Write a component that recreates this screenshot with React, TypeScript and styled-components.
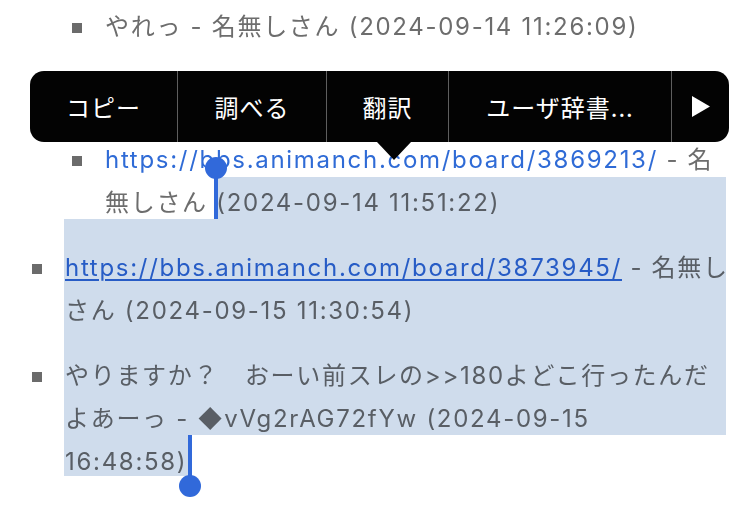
import styled, { createGlobalStyle } from "styled-components";

const GlobalStyle = createGlobalStyle`
  html, body {
    margin: 0;
    padding: 0;
    background: #fff;
  }
  body {
    font-family: "Inter", "Noto Sans CJK JP", sans-serif;
    -webkit-font-smoothing: antialiased;
  }
`;

const menuItems = [
    { label: "コピー", width: 147 },
    { label: "調べる", width: 149 },
    { label: "翻訳", width: 122 },
    { label: "ユーザ辞書...", width: 223 },
];

export default function App() {
    return (
        <>
            <GlobalStyle />
            <Page>
                <Thread>
                    <List $indent={72}>
                        <Item $after={68}>
                            <Bullet />
                            <Text>やれっ - 名無しさん (2024-09-14 11:26:09)</Text>
                        </Item>
                        <Item>
                            <Bullet />
                            <Text>
                                <Link href="#">https://bbs.animanch.com/board/3869213/</Link> - 名無しさん (2024-09-14 11:51:22)
                            </Text>
                        </Item>
                    </List>
                    <List $indent={32}>
                        <Item>
                            <Bullet />
                            <Text>
                                <Link href="#" $underline>https://bbs.animanch.com/board/3873945/</Link> - 名無しさん (2024-09-15 11:30:54)
                            </Text>
                        </Item>
                        <Item>
                            <Bullet />
                            <Text>
                                やりますか？　おーい前スレの&gt;&gt;180よどこ行ったんだよあーっ - ◆vVg2rAG72fYw (2024-09-15
                                <br />
                                16:48:58)
                            </Text>
                        </Item>
                    </List>
                </Thread>

                {/* selection highlight */}
                <Selection>
                    <SelRect $x={218} $y={177} $w={508} $h={42} />
                    <SelRect $x={64} $y={219} $w={662} $h={216} />
                    <SelRect $x={64} $y={435} $w={125} $h={41} />
                </Selection>
                <Handle $x={216} $y={168} $h={51} $knob="top" />
                <Handle $x={190} $y={435} $h={51} $knob="bottom" />

                <Callout>
                    {menuItems.map((m) => (
                        <MenuItem key={m.label} $w={m.width}>{m.label}</MenuItem>
                    ))}
                    <MenuItem $w={58}>
                        <svg width="18" height="21" viewBox="0 0 18 21">
                            <path d="M0 0 L18 10.5 L0 21 Z" fill="#fff" />
                        </svg>
                    </MenuItem>
                </Callout>
            </Page>
        </>
    );
}

const Page = styled.div`
    position: relative;
    width: 750px;
    height: 513px;
    overflow: hidden;
    box-sizing: border-box;
    padding: 5px 17px 0 0;
    color: #6d6d6d;
    font-size: 24px;
    line-height: 43px;
    letter-spacing: 1.7px;
`;

const Thread = styled.div`
    display: flex;
    flex-direction: column;
    gap: 22px;
`;

const List = styled.ul<{ $indent: number }>`
    list-style: none;
    margin: 0;
    padding: 0 0 0 ${({ $indent }) => $indent}px;
    display: flex;
    flex-direction: column;
    gap: 22px;
`;

const Item = styled.li<{ $after?: number }>`
    display: grid;
    grid-template-columns: 10px 1fr;
    column-gap: 23px;
    margin-bottom: ${({ $after }) => $after ?? 0}px;
`;

const Bullet = styled.span`
    height: 43px;
    display: flex;
    align-items: center;

    &::before {
        content: "";
        width: 10px;
        height: 10px;
        margin-top: 2px;
        background: #6b6b6b;
    }
`;

const Text = styled.span`
    display: block;
`;

const Link = styled.a<{ $underline?: boolean }>`
    color: #2f6bd6;
    text-decoration: ${({ $underline }) => ($underline ? "underline" : "none")};
    text-decoration-thickness: 2px;
    text-underline-offset: 3px;
`;

const Selection = styled.div`
    position: absolute;
    inset: 0;
    pointer-events: none;
    mix-blend-mode: multiply;
    z-index: 1;
`;

const SelRect = styled.div<{ $x: number; $y: number; $w: number; $h: number }>`
    position: absolute;
    left: ${({ $x }) => $x}px;
    top: ${({ $y }) => $y}px;
    width: ${({ $w }) => $w}px;
    height: ${({ $h }) => $h}px;
    background: #cfdcec;
`;

const Handle = styled.div<{ $x: number; $y: number; $h: number; $knob: "top" | "bottom" }>`
    position: absolute;
    left: ${({ $x }) => $x - 2}px;
    top: ${({ $y }) => $y}px;
    width: 4px;
    height: ${({ $h }) => $h}px;
    background: #3169da;
    z-index: 2;

    &::after {
        content: "";
        position: absolute;
        left: -9px;
        ${({ $knob }) => ($knob === "top" ? "top: -11px;" : "bottom: -11px;")}
        width: 22px;
        height: 22px;
        border-radius: 50%;
        background: #3169da;
    }
`;

const Callout = styled.div`
    position: absolute;
    left: 30px;
    top: 71px;
    width: 699px;
    height: 71px;
    display: flex;
    background: #030303;
    border-radius: 14px;
    z-index: 3;
    color: #fff;
    font-family: "Noto Sans CJK JP", sans-serif;
    font-size: 24px;
    line-height: 1;
    letter-spacing: 1px;

    &::after {
        content: "";
        position: absolute;
        left: 347px;
        bottom: -18px;
        border-left: 17.5px solid transparent;
        border-right: 17.5px solid transparent;
        border-top: 18px solid #030303;
    }
`;

const MenuItem = styled.div<{ $w: number }>`
    width: ${({ $w }) => $w}px;
    box-sizing: border-box;
    display: flex;
    align-items: center;
    justify-content: center;

    & + & {
        border-left: 1px solid #5e5e5e;
    }
`;
